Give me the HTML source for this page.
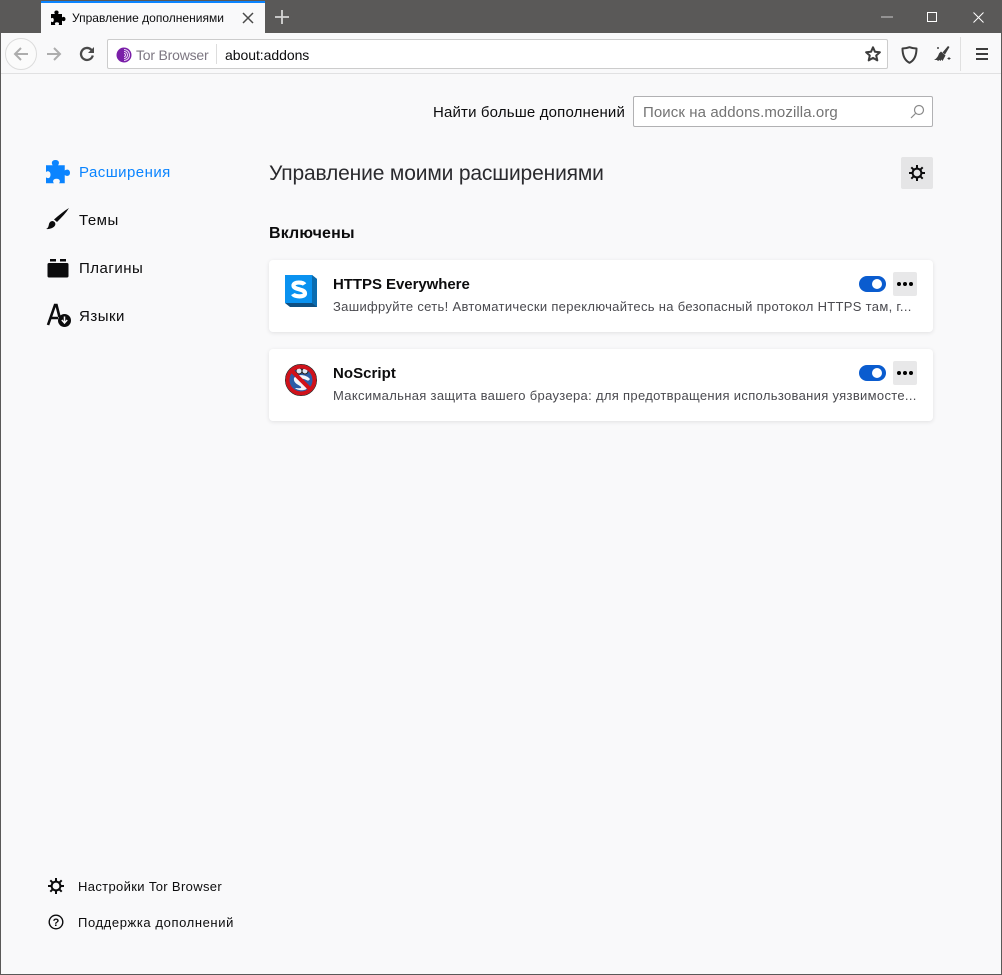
<!DOCTYPE html>
<html><head><meta charset="utf-8"><style>
html,body{margin:0;padding:0;width:1002px;height:975px;overflow:hidden;background:#f9f9fa}
body{font-family:"Liberation Sans","DejaVu Sans",sans-serif;position:relative;color:#0c0c0d}
.a{position:absolute;white-space:nowrap}
svg{position:absolute;overflow:visible}
</style></head><body>
<div class="a" style="left:0;top:0;width:1002px;height:33px;background:#5a5958"></div>
<div class="a" style="left:0;top:33px;width:1002px;height:41px;background:#f9f9fa;border-bottom:1px solid #e1e1e2;box-sizing:border-box"></div>
<div class="a" style="left:41px;top:1px;width:224px;height:32px;background:#f9f9fa;border-top:2px solid #0a84ff;box-sizing:border-box"></div>
<div class="a" style="left:0;top:0;width:1px;height:975px;background:#5a5958"></div>
<div class="a" style="right:0;top:0;width:1px;height:975px;background:#5a5958"></div>
<div class="a" style="left:0;top:974px;width:1002px;height:1px;background:#5a5958"></div>

<svg style="left:50px;top:10px" width="16" height="16" viewBox="0 0 16 16"><path fill="#000" d="M1 4h4c-1-1-1-3.500 1.500-3.500S9 3 8 4h4v3.500c1-1 3.500-1 3.500 1.500S13 11.500 12 10.500V15H8.500c1-1 .8-2.800-1.500-2.800S4.500 14 5.500 15H1v-3.500c1 1 2.800.8 2.800-1.500S2 7.500 1 8.500z"/></svg>
<div class="a" style="left:72px;top:11px;font-size:12px;letter-spacing:.01px;color:#0c0c0d">Управление дополнениями</div>
<svg style="left:242px;top:12px" width="12" height="12"><path d="M1 1l10 10M11 1L1 11" stroke="#4a4a4a" stroke-width="1.500"/></svg>
<svg style="left:275px;top:10px" width="14" height="14"><path d="M7 0v14M0 7h14" stroke="#d6d6d6" stroke-width="1.800"/></svg>
<svg style="left:881px;top:16px" width="12" height="2"><path d="M0 1h12" stroke="#ccc" stroke-width="1"/></svg>
<svg style="left:927px;top:12px" width="11" height="11"><rect x=".5" y=".5" width="9" height="9" fill="none" stroke="#fff"/></svg>
<svg style="left:973px;top:12px" width="11" height="11"><path d="M.5.500l10 10M10.500.500l-10 10" stroke="#fff"/></svg>

<div class="a" style="left:5px;top:38px;width:32px;height:32px;border:1px solid #dcdcdc;border-radius:50%;box-sizing:border-box;background:#fbfbfb"></div>
<svg style="left:13px;top:46px" width="16" height="16" fill="none" stroke="#adadad" stroke-width="2"><path d="M15 8H2M8 2L2 8l6 6"/></svg>
<svg style="left:46px;top:46px" width="16" height="16" fill="none" stroke="#adadad" stroke-width="2"><path d="M1 8h13M8 2l6 6-6 6"/></svg>
<svg style="left:79px;top:46px" width="16" height="16" fill="none" stroke="#4a4a4a" stroke-width="2.300"><path d="M13.800 9.500A6 6 0 1 1 12 3.500L14 6"/><path d="M15 1v6H9" fill="#4a4a4a" stroke="none"/></svg>
<div class="a" style="left:107px;top:39px;width:781px;height:30px;background:#fff;border:1px solid #ccc;border-radius:2px;box-sizing:border-box"></div>
<svg style="left:116px;top:47px" width="16" height="16" viewBox="0 0 16 16"><circle cx="8" cy="8" r="7.500" fill="#7a1fa8"/><path d="M8 2.500a5.500 5.500 0 0 1 0 11M8 4.500a3.500 3.500 0 0 1 0 7M8 6.500a1.500 1.500 0 0 1 0 3" fill="none" stroke="#ecd9f5" stroke-width="1"/></svg>
<div class="a" style="left:136px;top:47px;font-size:14px;letter-spacing:-.2px;color:#7d7782">Tor Browser</div>
<div class="a" style="left:216px;top:44px;width:1px;height:20px;background:#ddd"></div>
<div class="a" style="left:225px;top:47px;font-size:14px;letter-spacing:-.05px;color:#0c0c0d">about:addons</div>
<svg style="left:865px;top:46px" width="16" height="16" viewBox="0 0 16 16"><path d="M8 1.300l2 4.500 4.900.5-3.700 3.200 1.100 4.900L8 11.900l-4.300 2.500 1.100-4.900L1.100 6.300 6 5.800z" fill="none" stroke="#3d3d3d" stroke-width="2" stroke-linejoin="round"/></svg>
<svg style="left:901px;top:46px" width="17" height="18" viewBox="0 0 17 18"><path d="M8.500 1.200c2.500 1 4.500 1.300 7 1.300 0 6-1.500 11.500-7 14.300C3 14 1.500 8.500 1.500 2.500c2.500 0 4.500-.3 7-1.300z" fill="none" stroke="#3d3d3d" stroke-width="2" stroke-linejoin="round"/></svg>
<svg style="left:933px;top:46px" width="18" height="17" viewBox="0 0 18 17"><path d="M15 0L9.500 6.500l2.500 2L16.500 1z" fill="#3d3d3d"/><path d="M8 5.500l4.500 4-3 5.500-1-1.500-1 1.500-1-1-1.500 1-1-1L1 14c3-1.500 4.500-4.500 5-6.500z" fill="#3d3d3d"/><path d="M16 11v3M14.500 12.500h3M5 1v2M4 2h2" stroke="#3d3d3d" stroke-width=".9"/></svg>
<div class="a" style="left:960px;top:37px;width:1px;height:34px;background:#e0e0e0"></div>
<svg style="left:976px;top:47px" width="12" height="14"><path d="M0 2h12M0 7h12M0 12h12" stroke="#3d3d3d" stroke-width="2"/></svg>

<div class="a" style="left:433px;top:104px;font-size:15px;letter-spacing:.16px;color:#0c0c0d">Найти больше дополнений</div>
<div class="a" style="left:633px;top:96px;width:300px;height:31px;background:#fff;border:1px solid #b1b1b3;border-radius:2px;box-sizing:border-box"></div>
<div class="a" style="left:643px;top:104px;font-size:15px;letter-spacing:.09px;color:#737373">Поиск на addons.mozilla.org</div>
<svg style="left:910px;top:104px" width="15" height="15" fill="none" stroke="#8a8a8a" stroke-width="1.200"><circle cx="9" cy="6" r="4.500"/><path d="M5.500 9.500L1 14"/></svg>

<div class="a" style="left:269px;top:162px;font-size:21px;font-weight:300;letter-spacing:-.15px;color:#2a2a2e">Управление моими расширениями</div>
<div class="a" style="left:901px;top:157px;width:32px;height:32px;background:#e5e5e6;border-radius:2px"></div>
<svg style="left:909px;top:165px" width="16" height="16" viewBox="0 0 16 16"><g stroke="#0c0c0d" stroke-width="2"><path d="M8 0v16M0 8h16M2.300 2.300l11.400 11.400M13.700 2.300L2.300 13.700"/></g><circle cx="8" cy="8" r="4.400" fill="#e5e5e6" stroke="#0c0c0d" stroke-width="2"/></svg>

<svg style="left:46px;top:160px" width="24" height="24" viewBox="0 0 16 16"><path fill="#0a84ff" d="M0 3.500h4.500c-1-1-1-3.500 1.800-3.500S9 2.500 8 3.500h4.500V7c1-1 3.500-1 3.500 1.500S13.500 11 12.500 10v5.500H8.700c1-1 .8-3-1.700-3s-2.700 2-1.700 3H0v-4c1 1 3 .8 3-1.700S1 7 0 8z"/></svg>
<div class="a" style="left:79px;top:164px;font-size:15px;letter-spacing:.45px;color:#0a84ff">Расширения</div>
<svg style="left:46px;top:207px" width="24" height="24" viewBox="0 0 24 24"><path fill="#0c0c0d" d="M23 1c-3 5-7 9-12 14l-3-2.500C13 8 18 4 23 1zM6.500 14c2.500.5 3.500 2.500 2.500 4.500S4 22.500 0 22c2.500-1 2.500-3 3-5 .4-1.600 1.800-3 3.500-3z"/></svg>
<div class="a" style="left:79px;top:212px;font-size:15px;letter-spacing:.5px;color:#0c0c0d">Темы</div>
<svg style="left:47px;top:258px" width="22" height="20" viewBox="0 0 22 20"><path fill="#0c0c0d" d="M3 1h6v2.500H3zM13 1h6v2.500h-6zM2 5h18c1 0 1.500.5 1.500 1.500V18c0 1-.5 1.500-1.500 1.500H2C1 19.500.500 19 .500 18V6.500C.500 5.500 1 5 2 5z"/></svg>
<div class="a" style="left:79px;top:260px;font-size:15px;letter-spacing:.5px;color:#0c0c0d">Плагины</div>
<svg style="left:46px;top:303px" width="25" height="25" viewBox="0 0 25 25"><path d="M2 22L9 2h1.500l3 12M5 15h7" fill="none" stroke="#0c0c0d" stroke-width="2.600"/><circle cx="18.500" cy="17.500" r="6.500" fill="#0c0c0d"/><path d="M18.500 13.500v6M15.800 17l2.700 3 2.700-3" fill="none" stroke="#f9f9fa" stroke-width="1.500"/></svg>
<div class="a" style="left:79px;top:308px;font-size:15px;letter-spacing:.5px;color:#0c0c0d">Языки</div>

<div class="a" style="left:269px;top:225px;font-size:16px;font-weight:bold;color:#0c0c0d;letter-spacing:.15px">Включены</div>

<div class="a" style="left:269px;top:260px;width:664px;height:72px;background:#fff;border-radius:4px;box-shadow:0 1px 4px rgba(12,12,13,.1)"></div>
<svg style="left:285px;top:275px" width="33" height="33" viewBox="0 0 33 33"><path d="M27 0l5 4v28H5l-5-4z" fill="#0e4f82"/><path d="M27 0l5 4v28l-5-4z" fill="#0a6cb0"/><rect width="27" height="28" fill="#0a92f0"/><path d="M19.500 9.500C18 7 8.500 6.500 8.500 10.500c0 4.500 11.500 3 11.500 8 0 4-10.500 3.500-12 .5" fill="none" stroke="#fff" stroke-width="4.200"/></svg>
<div class="a" style="left:333px;top:276px;font-size:15px;font-weight:bold;color:#0c0c0d;letter-spacing:-.05px">HTTPS Everywhere</div>
<div class="a" style="left:333px;top:299px;font-size:13px;letter-spacing:.31px;color:#4a4a4f">Зашифруйте сеть! Автоматически переключайтесь на безопасный протокол HTTPS там, г...</div>
<div class="a" style="left:859px;top:276px;width:27px;height:16px;background:#0a5ccf;border-radius:8px"></div>
<div class="a" style="left:872px;top:279px;width:10px;height:10px;background:#fff;border-radius:50%"></div>
<div class="a" style="left:893px;top:272px;width:24px;height:24px;background:#e8e8e9;border-radius:2px"></div>
<svg style="left:897px;top:282px" width="16" height="4"><circle cx="2" cy="2" r="2"/><circle cx="8" cy="2" r="2"/><circle cx="14" cy="2" r="2"/></svg>

<div class="a" style="left:269px;top:349px;width:664px;height:72px;background:#fff;border-radius:4px;box-shadow:0 1px 4px rgba(12,12,13,.1)"></div>
<svg style="left:285px;top:364px" width="32" height="32" viewBox="0 0 32 32"><circle cx="16" cy="16" r="14" fill="#2b5ca8"/><path d="M9 14c3-4 12-4 16 1-2 3-3 1-6 0-4-1-6 0-3 2s7 3 6 7c-1 3-9 3-12 0 3 0 7 1 6-1-1-2-8-3-7-9z" fill="#f4f6fb"/><circle cx="14" cy="7" r="3" fill="#dfe7f5" stroke="#222"/><circle cx="20" cy="7" r="3" fill="#dfe7f5" stroke="#222"/><circle cx="16" cy="16" r="13.500" fill="none" stroke="#d0121b" stroke-width="4"/><path d="M6 6l20 20" stroke="#d0121b" stroke-width="4"/><circle cx="16" cy="16" r="15.700" fill="none" stroke="#222" stroke-width=".6"/></svg>
<div class="a" style="left:333px;top:365px;font-size:15px;font-weight:bold;color:#0c0c0d;letter-spacing:.05px">NoScript</div>
<div class="a" style="left:333px;top:388px;font-size:13px;letter-spacing:.32px;color:#4a4a4f">Максимальная защита вашего браузера: для предотвращения использования уязвимосте...</div>
<div class="a" style="left:859px;top:365px;width:27px;height:16px;background:#0a5ccf;border-radius:8px"></div>
<div class="a" style="left:872px;top:368px;width:10px;height:10px;background:#fff;border-radius:50%"></div>
<div class="a" style="left:893px;top:361px;width:24px;height:24px;background:#e8e8e9;border-radius:2px"></div>
<svg style="left:897px;top:371px" width="16" height="4"><circle cx="2" cy="2" r="2"/><circle cx="8" cy="2" r="2"/><circle cx="14" cy="2" r="2"/></svg>

<svg style="left:48px;top:878px" width="16" height="16" viewBox="0 0 16 16"><g stroke="#0c0c0d" stroke-width="2"><path d="M8 0v16M0 8h16M2.300 2.300l11.400 11.400M13.700 2.300L2.300 13.700"/></g><circle cx="8" cy="8" r="4.400" fill="#f9f9fa" stroke="#0c0c0d" stroke-width="2"/></svg>
<div class="a" style="left:78px;top:879px;font-size:13px;letter-spacing:.35px;color:#0c0c0d">Настройки Tor Browser</div>
<svg style="left:48px;top:914px" width="16" height="16" viewBox="0 0 16 16"><circle cx="8" cy="8" r="6.800" fill="none" stroke="#0c0c0d" stroke-width="1.400"/><text x="8" y="12" text-anchor="middle" font-family="Liberation Sans" font-size="11" font-weight="bold" fill="#0c0c0d">?</text></svg>
<div class="a" style="left:78px;top:915px;font-size:13px;letter-spacing:.6px;color:#0c0c0d">Поддержка дополнений</div>
</body></html>
